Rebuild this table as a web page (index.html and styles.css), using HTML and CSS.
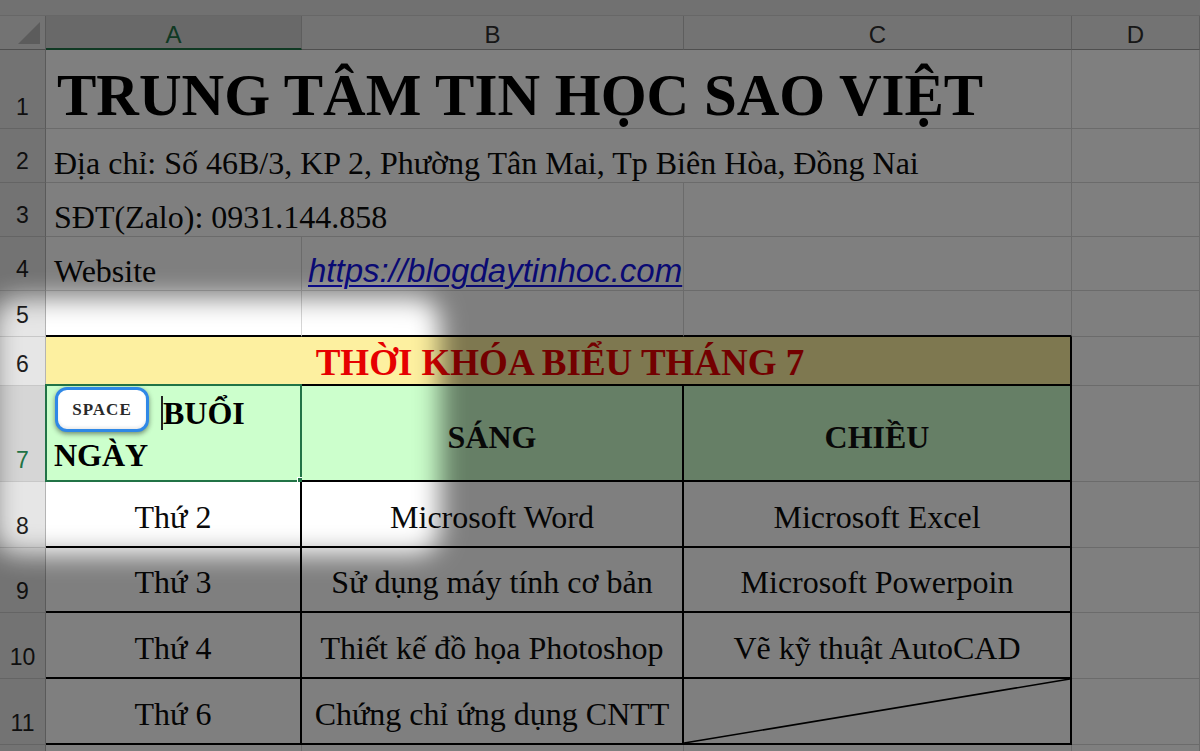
FILE: index.html
```html
<!DOCTYPE html>
<html lang="vi">
<head>
<meta charset="utf-8">
<title>Thời khóa biểu</title>
<link rel="stylesheet" href="styles.css">
</head>
<body>
<div class="sheet">
  <div class="strip"></div>

  <div class="corner"><span class="tri"></span></div>
  <div class="colh sel-col">A</div>
  <div class="colh">B</div>
  <div class="colh">C</div>
  <div class="colh">D</div>

  <div class="rowh">1</div>
  <div class="cell span3 title">TRUNG TÂM TIN HỌC SAO VIỆT</div>
  <div class="cell"></div>

  <div class="rowh">2</div>
  <div class="cell span3 txt">Địa chỉ: Số 46B/3, KP 2, Phường Tân Mai, Tp Biên Hòa, Đồng Nai</div>
  <div class="cell"></div>

  <div class="rowh">3</div>
  <div class="cell span2 txt">SĐT(Zalo): 0931.144.858</div>
  <div class="cell"></div>
  <div class="cell"></div>

  <div class="rowh">4</div>
  <div class="cell txt">Website</div>
  <div class="cell txt link-cell"><span class="link">https://blogdaytinhoc.com</span></div>
  <div class="cell"></div>
  <div class="cell"></div>

  <div class="rowh">5</div>
  <div class="cell top-edge"></div>
  <div class="cell top-edge"></div>
  <div class="cell top-edge"></div>
  <div class="cell"></div>

  <div class="rowh">6</div>
  <div class="cell span3 tb banner">THỜI KHÓA BIỂU THÁNG 7</div>
  <div class="cell"></div>

  <div class="rowh sel-row">7</div>
  <div class="cell tb head active">
    <div class="wrap-text">
      <span class="line1">BUỔI</span>
      <span class="line2">NGÀY</span>
    </div>
    <span class="caret"></span>
    <span class="key">SPACE</span>
    <span class="selection"><span class="handle"></span></span>
  </div>
  <div class="cell tb head center">SÁNG</div>
  <div class="cell tb head center">CHIỀU</div>
  <div class="cell"></div>

  <div class="rowh">8</div>
  <div class="cell tb center body">Thứ 2</div>
  <div class="cell tb center body">Microsoft Word</div>
  <div class="cell tb center body">Microsoft Excel</div>
  <div class="cell"></div>

  <div class="rowh">9</div>
  <div class="cell tb center body">Thứ 3</div>
  <div class="cell tb center body">Sử dụng máy tính cơ bản</div>
  <div class="cell tb center body">Microsoft Powerpoin</div>
  <div class="cell"></div>

  <div class="rowh">10</div>
  <div class="cell tb center body">Thứ 4</div>
  <div class="cell tb center body">Thiết kế đồ họa Photoshop</div>
  <div class="cell tb center body">Vẽ kỹ thuật AutoCAD</div>
  <div class="cell"></div>

  <div class="rowh">11</div>
  <div class="cell tb center body">Thứ 6</div>
  <div class="cell tb center body">Chứng chỉ ứng dụng CNTT</div>
  <div class="cell tb diag">
    <svg viewBox="0 0 100 100" preserveAspectRatio="none"><line x1="0" y1="100" x2="100" y2="0" vector-effect="non-scaling-stroke"/></svg>
  </div>
  <div class="cell"></div>

  <div class="rowh last"></div>
  <div class="cell last"></div>
  <div class="cell last"></div>
  <div class="cell last"></div>
  <div class="cell last"></div>
</div>
<div class="dim-layer"><div class="spotlight"></div></div>
</body>
</html>
```

FILE: styles.css
```css
html, body {
  margin: 0;
  padding: 0;
  width: 1200px;
  height: 751px;
  overflow: hidden;
  background: #ffffff;
}

body {
  position: relative;
}

.sheet {
  display: grid;
  grid-template-columns: 46px 256px 382px 388px 128px;
  grid-template-rows: 16px 34px 79px 54px 54px 54px 46px 49px 96px 66px 65px 66px 66px 6px;
  width: 1200px;
  height: 751px;
  font-family: "Liberation Serif", "Times New Roman", serif;
  color: #111;
}

.sheet > div {
  box-sizing: border-box;
  min-width: 0;
}

.strip {
  grid-column: 1 / -1;
  background: #e2e2e2;
  border-bottom: 1px solid #cfcfcf;
}

.corner {
  background: #e6e6e6;
  border-right: 1px solid #b4b4b4;
  border-bottom: 1px solid #9e9e9e;
  position: relative;
}

.tri {
  position: absolute;
  right: 5px;
  bottom: 5px;
  width: 0;
  height: 0;
  border-left: 22px solid transparent;
  border-bottom: 22px solid #b8b8b8;
}

.colh {
  background: #e6e6e6;
  border-right: 1px solid #bcbcbc;
  border-bottom: 1px solid #9e9e9e;
  display: flex;
  align-items: center;
  justify-content: center;
  font-family: "Liberation Sans", Arial, sans-serif;
  font-size: 24px;
  color: #2e2e2e;
  padding-top: 5px;
}

.colh.sel-col {
  background: #d2d2d2;
  color: #217346;
  border-bottom: 2px solid #217346;
}

.rowh {
  background: #e6e6e6;
  border-right: 1px solid #b4b4b4;
  border-bottom: 1px solid #c8c8c8;
  display: flex;
  align-items: flex-end;
  justify-content: center;
  padding-bottom: 9px;
  font-family: "Liberation Sans", Arial, sans-serif;
  font-size: 23px;
  line-height: 1;
  color: #1e1e1e;
}

.rowh.sel-row {
  background: #d6d6d6;
  color: #217346;
}

.cell {
  background: #ffffff;
  border-right: 1px solid #d6d6d6;
  border-bottom: 1px solid #d6d6d6;
  position: relative;
  white-space: nowrap;
}

.span3 { grid-column: span 3; }
.span2 { grid-column: span 2; }

.title {
  font-size: 59px;
  font-weight: bold;
  line-height: 1;
  display: flex;
  align-items: flex-end;
  padding-left: 11px;
  padding-bottom: 3px;
  color: #000;
}

.txt {
  font-size: 32px;
  line-height: 1;
  display: flex;
  align-items: flex-end;
  padding-left: 8px;
  padding-bottom: 3px;
  color: #0a0a0a;
}

.link-cell {
  padding-left: 6px;
}

.link {
  font-family: "Liberation Sans", Arial, sans-serif;
  font-style: italic;
  font-size: 33px;
  color: #1414e6;
  text-decoration: underline;
  text-decoration-thickness: 2px;
  text-underline-offset: 3px;
}

.top-edge {
  border-bottom: 2px solid #000;
}

.tb {
  border-right: 2px solid #000;
  border-bottom: 2px solid #000;
}

.banner {
  background: #fdf0a0;
  color: #e60000;
  font-weight: bold;
  font-size: 37px;
  line-height: 1;
  display: flex;
  align-items: center;
  justify-content: center;
  padding-top: 4px;
  padding-left: 4px;
}

.head {
  background: #ccffcc;
  font-weight: bold;
  font-size: 32px;
  line-height: 1;
}

.center {
  display: flex;
  align-items: center;
  justify-content: center;
}

.head.center {
  padding-top: 8px;
}

.body {
  font-size: 32px;
  line-height: 1;
  padding-top: 5px;
  color: #0a0a0a;
}

.active {
  display: flex;
  align-items: center;
  padding-left: 8px;
  padding-top: 2px;
}

.wrap-text {
  display: flex;
  flex-direction: column;
  align-items: flex-start;
  line-height: 42px;
  color: #000;
}

.line1 {
  margin-left: 109px;
}

.caret {
  position: absolute;
  left: 115px;
  top: 10px;
  width: 2px;
  height: 34px;
  background: #222;
}

.key {
  position: absolute;
  left: 9px;
  top: 1px;
  width: 94px;
  height: 45px;
  box-sizing: border-box;
  border: 3px solid #2f88e6;
  border-radius: 12px;
  background: #ffffff;
  box-shadow: 0 2px 5px rgba(0, 0, 0, 0.45), inset 0 -2px 3px rgba(0, 0, 0, 0.08);
  display: flex;
  align-items: center;
  justify-content: center;
  font-family: "Liberation Serif", "Times New Roman", serif;
  font-weight: bold;
  font-size: 17px;
  letter-spacing: 1px;
  color: #2a2a2a;
}

.selection {
  position: absolute;
  left: -1px;
  top: -2px;
  right: -2px;
  bottom: -2px;
  border: 2px solid #217346;
}

.handle {
  position: absolute;
  right: -5px;
  bottom: -5px;
  width: 6px;
  height: 6px;
  background: #217346;
  border: 1px solid #ffffff;
}

.diag svg {
  display: block;
  width: 100%;
  height: 100%;
}

.diag line {
  stroke: #000;
  stroke-width: 1.6;
}

.last {
  border-bottom: none;
}

/* dimming overlay with a soft-edged hole (spotlight), clipped to the frame */
.dim-layer {
  position: absolute;
  left: 0;
  top: 0;
  width: 1200px;
  height: 751px;
  overflow: hidden;
  pointer-events: none;
  z-index: 10;
}

.spotlight {
  position: absolute;
  left: -2006px;
  top: -1702px;
  width: 446px;
  height: 256px;
  border: 2000px solid rgba(0, 0, 0, 0.5);
  border-radius: 2024px;
  filter: blur(13px);
}
```
